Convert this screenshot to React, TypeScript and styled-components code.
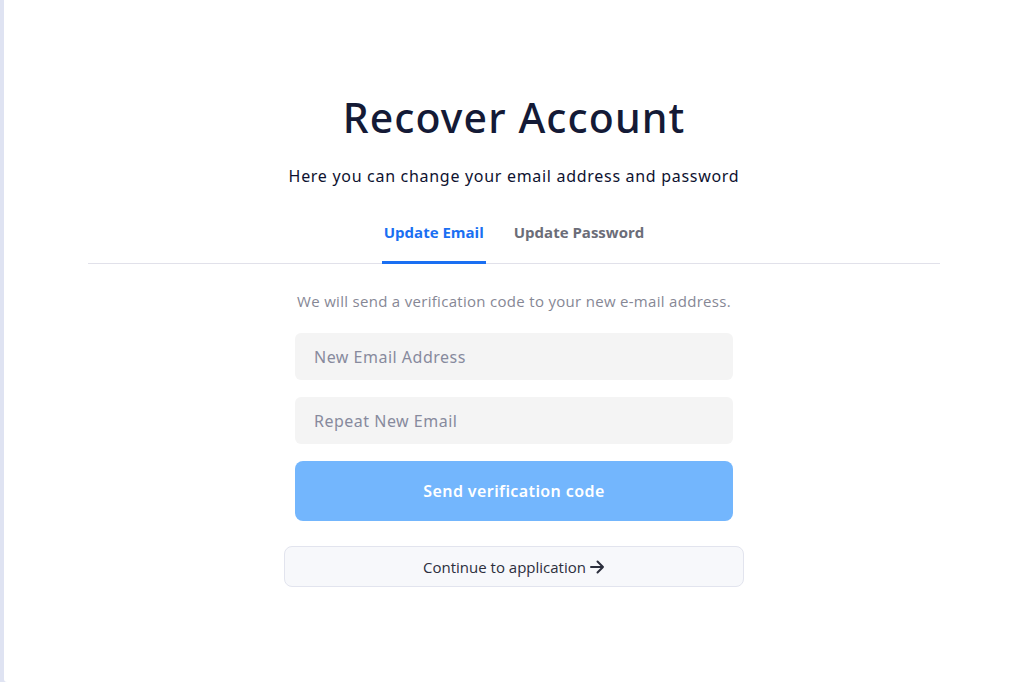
import React, { useState } from 'react'
import styled, { createGlobalStyle } from 'styled-components'

const GlobalStyle = createGlobalStyle`
  html, body {
    margin: 0;
    padding: 0;
    height: 100%;
    background: #dfe3f2;
  }
  * {
    box-sizing: border-box;
  }
`

const HEAD_FONT = `'Noto Sans', 'Open Sans', sans-serif`
const BODY_FONT = `'Open Sans', 'Noto Sans', sans-serif`

const Page = styled.div`
  display: flex;
  min-height: 682px;
  padding-left: 4px;
`

const Panel = styled.main`
  flex: 1;
  background: #ffffff;
  border-bottom-left-radius: 3px;
  padding: 92px 81px 0 84px;
  height: 682px;
`

const Content = styled.div`
  display: flex;
  flex-direction: column;
  align-items: center;
`

const Title = styled.h1`
  margin: 0;
  font-family: ${HEAD_FONT};
  font-weight: 500;
  font-size: 41px;
  line-height: 50px;
  letter-spacing: 1.1px;
  color: #141a36;
`

const Subtitle = styled.p`
  margin: 22px 0 0;
  font-family: ${HEAD_FONT};
  font-size: 16px;
  line-height: 24px;
  letter-spacing: 0.7px;
  color: #0e1230;
`

const Tabs = styled.div`
  display: flex;
  justify-content: center;
  gap: 26px;
  width: 100%;
  margin-top: 34px;
  border-bottom: 1px solid #e1e1ea;
`

const Tab = styled.button<{ $active?: boolean }>`
  background: none;
  border: none;
  padding: 0 2px 19px;
  margin-bottom: -1px;
  font-family: ${BODY_FONT};
  font-weight: 700;
  font-size: 15px;
  line-height: 20px;
  color: ${({ $active }) => ($active ? '#1a6ff2' : '#6b6d78')};
  border-bottom: 3px solid ${({ $active }) => ($active ? '#1a6ff2' : 'transparent')};
  cursor: pointer;
`

const Form = styled.form`
  display: flex;
  flex-direction: column;
  align-items: center;
  width: 438px;
  margin-top: 27px;
`

const Hint = styled.p`
  margin: 0 0 22px;
  font-family: ${BODY_FONT};
  font-size: 15px;
  line-height: 20px;
  letter-spacing: 0.3px;
  color: #868795;
  white-space: nowrap;
`

const Input = styled.input`
  width: 100%;
  height: 47px;
  margin-bottom: 17px;
  border: none;
  border-radius: 6px;
  background: #f4f4f4;
  padding: 0 19px;
  font-family: ${HEAD_FONT};
  font-size: 16px;
  letter-spacing: 0.5px;
  color: #2a2d3e;
  outline: none;

  &::placeholder {
    color: #878a9d;
  }
`

const SubmitButton = styled.button`
  width: 100%;
  height: 60px;
  border: none;
  border-radius: 8px;
  background: #73b6fd;
  color: #ffffff;
  font-family: ${HEAD_FONT};
  font-weight: 600;
  font-size: 16px;
  letter-spacing: 0.4px;
  cursor: pointer;
`

const ContinueButton = styled.button`
  display: flex;
  align-items: center;
  justify-content: center;
  gap: 4px;
  width: 460px;
  height: 41px;
  margin-top: 25px;
  border: 1px solid #e2e4ee;
  border-radius: 8px;
  background: #f7f8fb;
  color: #2c2f3d;
  font-family: ${BODY_FONT};
  font-size: 15px;
  cursor: pointer;
`

const Arrow = () => (
  <svg width="15" height="14" viewBox="0 0 15 14" fill="none">
    <path d="M1 7h12M7.5 1.5L13 7l-5.5 5.5" stroke="#2c2f3d" strokeWidth="2" strokeLinecap="round" strokeLinejoin="round" />
  </svg>
)

export default function App() {
  const [tab, setTab] = useState<'email' | 'password'>('email')

  return (
    <>
      <GlobalStyle />
      <Page>
        <Panel>
          <Content>
            <Title>Recover Account</Title>
            <Subtitle>Here you can change your email address and password</Subtitle>
            <Tabs>
              <Tab $active={tab === 'email'} onClick={() => setTab('email')}>
                Update Email
              </Tab>
              <Tab $active={tab === 'password'} onClick={() => setTab('password')}>
                Update Password
              </Tab>
            </Tabs>
            <Form onSubmit={(e) => e.preventDefault()}>
              <Hint>We will send a verification code to your new e-mail address.</Hint>
              <Input type="email" placeholder="New Email Address" />
              <Input type="email" placeholder="Repeat New Email" />
              <SubmitButton type="submit">Send verification code</SubmitButton>
              <ContinueButton type="button">
                Continue to application
                <Arrow />
              </ContinueButton>
            </Form>
          </Content>
        </Panel>
      </Page>
    </>
  )
}
